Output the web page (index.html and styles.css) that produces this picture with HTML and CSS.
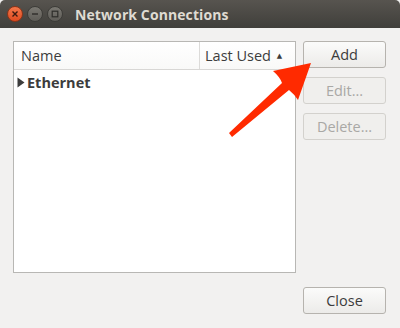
FILE: index.html
```html
<!DOCTYPE html>
<html lang="en">
<head>
    <meta charset="UTF-8">
    <title>Network Connections</title>
    <link rel="stylesheet" href="styles.css">
</head>
<body>
    <div class="window">
        <!-- title bar -->
        <div class="titlebar">
            <div class="controls">
                <span class="ctl close">
                    <svg width="8" height="8" viewBox="0 0 8 8"><path d="M1.5 1.5 L6.5 6.5 M6.5 1.5 L1.5 6.5" stroke="#3a1a10" stroke-width="1.4"/></svg>
                </span>
                <span class="ctl">
                    <svg width="8" height="8" viewBox="0 0 8 8"><path d="M1 4 H7" stroke="#2e2d2a" stroke-width="1.4"/></svg>
                </span>
                <span class="ctl">
                    <svg width="8" height="8" viewBox="0 0 8 8"><rect x="1.2" y="1.2" width="5.6" height="5.6" fill="none" stroke="#2e2d2a" stroke-width="1.2"/></svg>
                </span>
            </div>
            <div class="title">Network Connections</div>
        </div>

        <div class="content">
            <div class="main">
                <div class="list">
                    <div class="list-head">
                        <div class="col-name">Name</div>
                        <div class="col-used">Last Used <span class="sort">&#9650;</span></div>
                    </div>
                    <div class="row">
                        <svg class="expander" width="8" height="11" viewBox="0 0 8 11"><path d="M0.5 0.5 L7.5 5.5 L0.5 10.5 Z" fill="#3c3c3c"/></svg>
                        <span>Ethernet</span>
                    </div>
                </div>
                <div class="side">
                    <button class="btn">Add</button>
                    <button class="btn" disabled>Edit...</button>
                    <button class="btn" disabled>Delete...</button>
                </div>
            </div>
            <div class="footer">
                <button class="btn">Close</button>
            </div>

            <!-- annotation arrow -->
            <svg class="arrow" width="400" height="328" viewBox="0 0 400 328">
                <path d="M311 63 L273 71 Q280 77 282 83 L229 133 L232 137 L289 90 Q294 94 298 100 Z" fill="#ff2a00"/>
            </svg>
        </div>
    </div>
</body>
</html>
```

FILE: styles.css
```css
body {
    margin: 0;
    font-family: "Open Sans", "DejaVu Sans", sans-serif;
    background-color: #f2f1f0;
}
.window {
    width: 400px;
    height: 328px;
    background-color: #f2f1f0;
    position: relative;
    overflow: hidden;
}
.titlebar {
    height: 28px;
    display: flex;
    align-items: center;
    background: linear-gradient(#57544f, #403f3b);
    border-radius: 5px 5px 0 0;
}
.controls {
    display: flex;
    gap: 4px;
    margin-left: 7px;
}
.ctl {
    width: 14px;
    height: 14px;
    border-radius: 50%;
    border: 1px solid #3d3c38;
    background: linear-gradient(#7a7872, #5e5c57);
    display: flex;
    align-items: center;
    justify-content: center;
}
.ctl.close {
    background: linear-gradient(#f4774a, #df4b20);
    border-color: #8e3418;
}
.title {
    margin-left: 12px;
    color: #dfdbd2;
    font-weight: bold;
    font-size: 14px;
    letter-spacing: 0.1px;
}
.content {
    padding: 13px 14px 14px 13px;
    display: flex;
    flex-direction: column;
}
.main {
    display: flex;
    gap: 7px;
}
.list {
    width: 281px;
    height: 230px;
    border: 1px solid #b8b7b4;
    background-color: #fff;
}
.list-head {
    height: 27px;
    display: flex;
    align-items: center;
    border-bottom: 1px solid #d8d7d5;
    background: linear-gradient(#fff, #f9f9f8);
    font-size: 14.5px;
    color: #3c3c3c;
}
.col-name {
    width: 178px;
    padding-left: 7px;
    border-right: 1px solid #dcdbd9;
    line-height: 27px;
}
.col-used {
    padding-left: 5px;
    line-height: 27px;
}
.sort {
    font-size: 7px;
    vertical-align: 3px;
    margin-left: 2px;
}
.row {
    height: 24px;
    display: flex;
    align-items: center;
    padding-left: 3px;
    font-size: 14.5px;
    font-weight: bold;
    color: #3c3c3c;
}
.expander {
    margin-right: 2px;
}
.side {
    display: flex;
    flex-direction: column;
    gap: 9px;
}
.btn {
    width: 83px;
    height: 27px;
    border: 1px solid #b6b3ae;
    border-radius: 3px;
    background: linear-gradient(#fbfbfa, #ecebe9);
    font-family: "Open Sans", "DejaVu Sans", sans-serif;
    font-size: 14.5px;
    color: #3c3c3c;
    padding: 0;
}
.btn:disabled {
    border-color: #d3d1cd;
    background: #f0efed;
    color: #a9a8a5;
}
.footer {
    display: flex;
    justify-content: flex-end;
    margin-top: 14px;
}
.arrow {
    position: absolute;
    left: 0;
    top: 0;
    pointer-events: none;
}
```
